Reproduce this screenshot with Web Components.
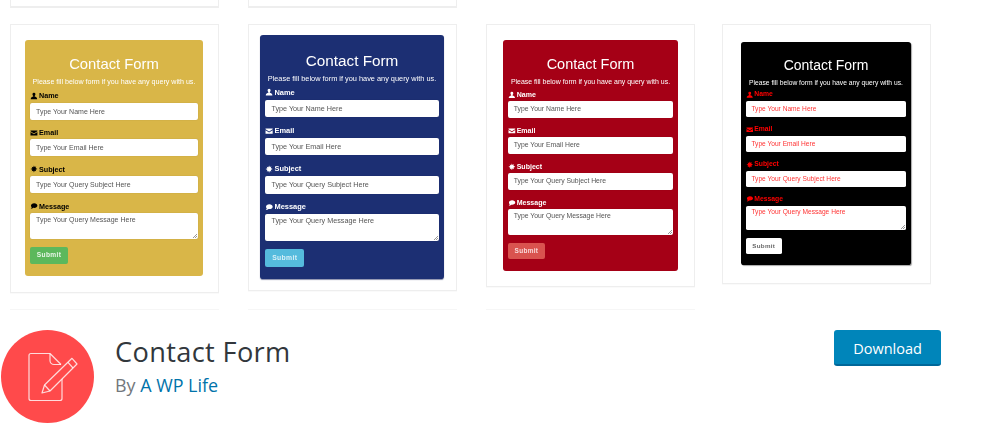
<!DOCTYPE html>
<html lang="en"><head><meta charset="utf-8"><title>Contact Form</title>
<style>
html,body{margin:0;background:#fff;}
body{font-family:"Open Sans",sans-serif;overflow:hidden;}
.c1{--fs:10px;--pad:15px 15px 16px 14px;--bg:#d9b648;--lab:#000;--ph:#555;--btn:#5cb85c;--btx:#e8f5e8;--w:178px;--ml:0px;--sh:none}
.c2{--fs:10.34px;--pad:10px 11px 11px 11px;--bg:#1c2f73;--lab:#fff;--ph:#555;--btn:#55bbdd;--btx:#d8f0f8;--w:184px;--ml:29px;--sh:0 1px 1px rgba(20,30,90,.5)}
.c3{--fs:9.78px;--pad:15px 15px 15px 16px;--bg:#a50016;--lab:#fff;--ph:#555;--btn:#d9534f;--btx:#f8dcdc;--w:175px;--ml:29px;--sh:none}
.c4{--fs:9.45px;--pad:17px 19px 18px 18px;--bg:#000;--lab:#f00;--ph:#f33;--btn:#fff;--btx:#666;--w:170px;--ml:27px;--sh:1px 1px 1px rgba(0,0,0,.35)}
</style></head><body>

<template id="t-field"><style>
:host{display:block;margin-top:.7em}
.lab{display:flex;align-items:center;gap:.15em;font:700 .72em/1 "Liberation Sans",sans-serif;color:var(--lab);height:1.67em}
svg{width:1.1em;height:1.1em;fill:currentColor;flex:none}
.box{background:#fff;border-radius:.28em;box-sizing:border-box;font:.7em/1.4em "Liberation Sans",sans-serif;color:var(--ph);box-shadow:0 0 1px rgba(0,0,0,.25);position:relative;height:2.43em;padding:0 .86em;line-height:2.43em;margin-top:.13em;white-space:nowrap}
:host([multi]) .box{height:3.72em;line-height:1.9em}
.grip{display:none;position:absolute;right:1px;bottom:1px;width:5px;height:5px;background:linear-gradient(135deg,transparent 55%,#999 55%,#999 65%,transparent 65%,transparent 78%,#999 78%,#999 88%,transparent 88%)}
:host([multi]) .grip{display:block}
</style><div class="lab"><svg viewBox="0 0 16 16"><path id="p"/></svg><slot></slot></div><div class="box"><span id="ph"></span><i class="grip"></i></div></template>

<template id="t-form"><style>
:host{display:block;box-sizing:border-box;background:#fff;border:1px solid #eee;box-shadow:0 1px 1px rgba(0,0,0,.02);padding:var(--pad);width:100%}
.panel{font-size:var(--fs);width:var(--w);box-sizing:border-box;background:var(--bg);border-radius:.3em;padding:1.5em .5em 1.2em;filter:blur(.45px);box-shadow:var(--sh)}
.t{font:400 1.48em/1.29em "Liberation Sans",sans-serif;color:#fff;text-align:center;height:1.29em}
.s{margin-top:.5em;font:.712em/1.4em "Liberation Sans",sans-serif;color:#fff;text-align:center;white-space:nowrap}
.fl{margin-top:-.5em}
.b{color:var(--btx);background:var(--btn);border-radius:.3em;font:700 .66em/2.56em "Liberation Sans",sans-serif;width:5.76em;height:2.56em;text-align:center;letter-spacing:.05em;margin-top:1.2em}
</style><div class="panel"><div class="t">Contact Form</div><div class="s">Please fill below form if you have any query with us.</div><div class="fl"><slot></slot></div><div class="b">Submit</div></div></template>

<template id="t-col"><style>
:host{display:flex;flex-direction:column;height:310px;box-sizing:border-box;width:209px;margin-left:var(--ml)}
.strip{height:8px;box-sizing:border-box;border:1px solid #eee;border-width:0 1px 2px;margin-bottom:16px;flex:none}
:host([nostrip]) .strip{border-color:transparent}
.hair{margin-top:auto;height:1px;background:#f6f6f6}
:host(.c4) .hair{background:transparent}
</style><div class="strip"></div><slot></slot><div class="hair"></div></template>

<template id="t-gal"><style>
:host{display:flex;padding-left:10px;height:310px;align-items:flex-start}
</style><slot></slot></template>

<template id="t-head"><style>
:host{display:flex;align-items:flex-start;padding:20px 42px 0 1px}
.info{margin-left:21px;flex:1;min-width:0;padding-top:4px}
h1{margin:0;font:400 27.2px/36px "Open Sans",sans-serif;color:#32373c;letter-spacing:.35px}
.by{margin-top:0;font:400 17.9px/30px "Open Sans",sans-serif;color:#72777c}
::slotted(a){color:#0073aa;text-decoration:none}
</style><slot name="icon"></slot><div class="info"><h1><slot name="title"></slot></h1><div class="by">By <slot name="author"></slot></div></div><slot name="action"></slot></template>

<template id="t-icon"><style>
:host{display:block;width:93px;height:93px;flex:none;margin-top:0}
svg{display:block}
</style><svg width="93" height="93" viewBox="1 330 93 93"><circle cx="47.5" cy="376.5" r="46.5" fill="#ff4a4b"/><g fill="none" stroke="#fff" stroke-opacity=".8" stroke-width="1.2" stroke-linejoin="round"><path d="M50 353.5H31a2 2 0 0 0-2 2V398.5a2 2 0 0 0 2 2H60a2 2 0 0 0 2-2V374"/><path d="M50 353.5L61 364.5"/><path d="M50 353.500V360.500a4 4 0 0 0 4 4H61"/><path d="M42 393L44.500 385L72 358.300L77 364L50 391Z" fill="#ff4a4b"/><path d="M68 362.300L73 368"/><path d="M44.500 385L50 391"/></g></svg></template>

<template id="t-btn"><style>
:host{display:block;flex:none;box-sizing:border-box;width:107px;height:36px;background:#0085ba;border-bottom:2px solid #006799;border-radius:3px;color:#fff;font:400 14.5px/37px "Open Sans",sans-serif;text-align:center}
</style><slot></slot></template>

<wp-gallery>
  <gallery-col class="c1"><contact-card>
    <form-field icon="user" ph="Type Your Name Here">Name</form-field>
    <form-field icon="mail" ph="Type Your Email Here">Email</form-field>
    <form-field icon="star" ph="Type Your Query Subject Here">Subject</form-field>
    <form-field icon="chat" ph="Type Your Query Message Here" multi>Message</form-field>
  </contact-card></gallery-col>
  <gallery-col class="c2"><contact-card>
    <form-field icon="user" ph="Type Your Name Here">Name</form-field>
    <form-field icon="mail" ph="Type Your Email Here">Email</form-field>
    <form-field icon="star" ph="Type Your Query Subject Here">Subject</form-field>
    <form-field icon="chat" ph="Type Your Query Message Here" multi>Message</form-field>
  </contact-card></gallery-col>
  <gallery-col class="c3" nostrip><contact-card>
    <form-field icon="user" ph="Type Your Name Here">Name</form-field>
    <form-field icon="mail" ph="Type Your Email Here">Email</form-field>
    <form-field icon="star" ph="Type Your Query Subject Here">Subject</form-field>
    <form-field icon="chat" ph="Type Your Query Message Here" multi>Message</form-field>
  </contact-card></gallery-col>
  <gallery-col class="c4" nostrip><contact-card>
    <form-field icon="user" ph="Type Your Name Here">Name</form-field>
    <form-field icon="mail" ph="Type Your Email Here">Email</form-field>
    <form-field icon="star" ph="Type Your Query Subject Here">Subject</form-field>
    <form-field icon="chat" ph="Type Your Query Message Here" multi>Message</form-field>
  </contact-card></gallery-col>
</wp-gallery>
<plugin-head>
  <plugin-icon slot="icon"></plugin-icon>
  <span slot="title">Contact Form</span>
  <a slot="author" href="#">A WP Life</a>
  <dl-btn slot="action">Download</dl-btn>
</plugin-head>

<script>
const ICONS={
 user:"M8 1.5a3 3 0 0 1 3 3c0 1.6-.8 3-1.6 3.7v1.1C11.5 10 14.5 11 14.5 14.5h-13C1.500 11 4.500 10 6.600 9.300V8.200C5.800 7.500 5 6.100 5 4.500a3 3 0 0 1 3-3z",
 mail:"M1 3h14v1.600L8 9 1 4.600zM1 6.300L8 10.700 15 6.300V13H1z",
 star:"M8 1l1.400 3 3.100-1.200-1.200 3.100L15 8l-3.700 1.700 1.200 3.100-3.100-1.200L8 15l-1.400-3.400-3.100 1.200 1.200-3.100L1 8l3.700-1.600L3.500 3.300l3.100 1.200z",
 chat:"M8.500 2.500c3.600 0 6.500 2 6.500 4.700s-2.900 4.700-6.500 4.700c-.6 0-1.200-.1-1.700-.2C5.500 13 3.500 13.800 1.500 13.800c1-.8 1.800-1.900 2-3C2.500 9.900 2 8.600 2 7.200 2 4.500 4.900 2.500 8.500 2.500z"
};
function def(name,tid,init){
  customElements.define(name,class extends HTMLElement{
    constructor(){super();this.attachShadow({mode:"open"}).appendChild(document.getElementById(tid).content.cloneNode(true));}
    connectedCallback(){init&&init(this);}
  });
}
def("wp-gallery","t-gal");
def("gallery-col","t-col");
def("contact-card","t-form");
def("form-field","t-field",el=>{
  el.shadowRoot.getElementById("p").setAttribute("d",ICONS[el.getAttribute("icon")]);
  el.shadowRoot.getElementById("ph").textContent=el.getAttribute("ph");
});
def("plugin-head","t-head");
def("plugin-icon","t-icon");
def("dl-btn","t-btn");
</script>
</body></html>
